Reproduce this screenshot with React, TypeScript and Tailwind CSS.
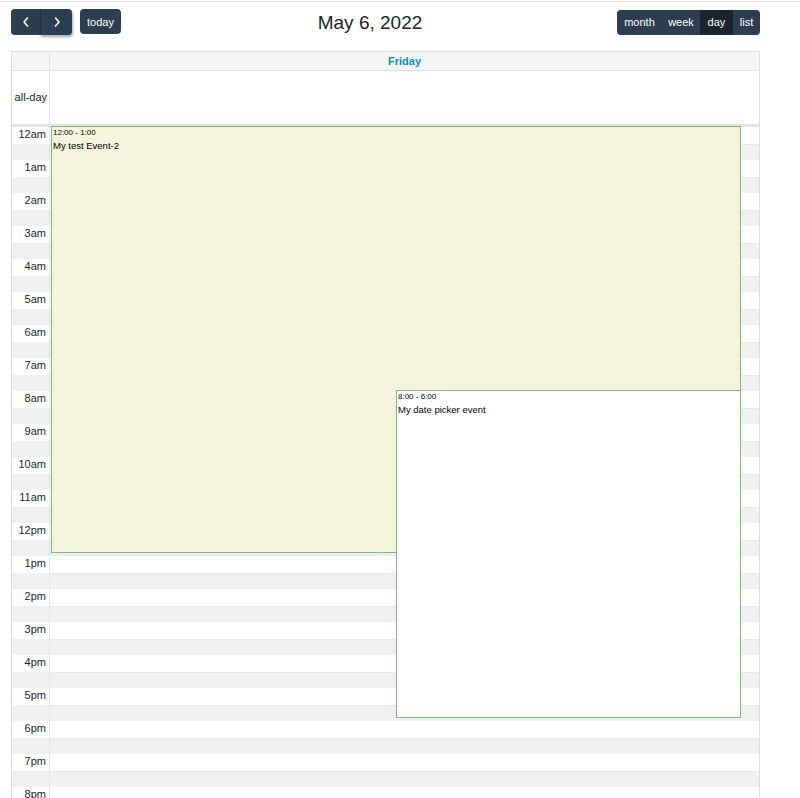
import React from "react";

const hours = ["12am","1am","2am","3am","4am","5am","6am","7am","8am","9am","10am","11am","12pm","1pm","2pm","3pm","4pm","5pm","6pm","7pm","8pm","9pm","10pm","11pm"];

function Chevron({ dir }: { dir: "l" | "r" }) {
  return (
    <svg width="10" height="12" viewBox="0 0 10 12" fill="none" stroke="white" strokeWidth="1.6" strokeLinecap="round" strokeLinejoin="round">
      {dir === "l" ? <path d="M6.5 2 L3 6 L6.5 10" /> : <path d="M3.5 2 L7 6 L3.5 10" />}
    </svg>
  );
}

export default function App() {
  return (
    <div className="w-[800px] h-[798px] overflow-hidden bg-white text-[#212529]" style={{ fontFamily: '"Liberation Sans", Arial, sans-serif' }}>
      <div className="h-px mt-px bg-[#e6e6e6]" />
      <div className="w-[749px] ml-[11px]">
        <div className="flex items-center justify-between mt-[7px] h-[26px]">
          <div className="flex items-start gap-[8px]">
            <div className="flex h-[26px]">
              <button className="w-[29px] h-[26px] bg-[#2c3e50] rounded-l-[4px] flex items-center justify-center">
                <Chevron dir="l" />
              </button>
              <button className="w-[32px] h-[26px] bg-[#2c3e50] rounded-r-[4px] flex items-center justify-center shadow-[1px_2px_3px_rgba(0,0,0,0.35)] border-l border-[#22303d]">
                <Chevron dir="r" />
              </button>
            </div>
            <button className="w-[41px] h-[25px] bg-[#2c3e50] rounded-[4px] text-white text-[11px] pt-[1px]">today</button>
          </div>
          <div className="text-[19px] leading-none pl-[2px]">May 6, 2022</div>
          <div className="flex h-[25px] rounded-[4px] overflow-hidden text-white text-[11px] bg-[#2c3e50]">
            <div className="w-[45px] flex items-center justify-center">month</div>
            <div className="w-[38px] flex items-center justify-center">week</div>
            <div className="w-[33px] flex items-center justify-center bg-[#1a252f]">day</div>
            <div className="w-[27px] flex items-center justify-center">list</div>
          </div>
        </div>

        <div className="mt-[16px] border border-[#dddddd]">
          <div className="flex h-[19px] bg-[#f5f5f5] border-b border-[#e2e2e2]">
            <div className="w-[38px] border-r border-[#e2e2e2]" />
            <div className="flex-1 flex items-center justify-center text-[11px] font-bold text-[#0b8fc4]">Friday</div>
          </div>
          <div className="flex h-[53px]">
            <div className="w-[38px] border-r border-[#e6e6e6] flex items-center justify-end pr-[2px] text-[11px]">all-day</div>
            <div className="flex-1" />
          </div>
          <div className="h-[3px] bg-[#e3e3e3]" />
          <div className="flex">
            <div className="w-[38px] border-r border-[#e6e6e6] shrink-0">
              {hours.map((h) => (
                <div key={h} className="h-[33px]">
                  <div className="h-[16.5px] bg-white flex items-center justify-end pr-[3px] pb-[2px] text-[11px]">{h}</div>
                  <div className="h-[16.5px] bg-[#f0f0f0]" />
                </div>
              ))}
            </div>
            <div className="flex-1 relative">
              {hours.map((h) => (
                <div key={h} className="h-[33px]">
                  <div className="h-[16.5px] bg-white" />
                  <div className="h-[16.5px] bg-[#f0f0f0] border-t border-dotted border-[#e2e2e2]" />
                </div>
              ))}
              <div className="absolute left-[1px] top-[-1px] w-[690px] h-[427px] bg-[#f4f4dc] border border-[#7dbb7d] px-[1px] text-black">
                <div className="text-[8px] leading-[10px] mt-[1px]">12:00 - 1:00</div>
                <div className="text-[9.5px] leading-[12px] mt-[2px]">My test Event-2</div>
              </div>
              <div className="absolute left-[346px] top-[263px] w-[345px] h-[328px] bg-white border border-[#7dbb7d] px-[1px] text-black">
                <div className="text-[8px] leading-[10px] mt-[1px]">8:00 - 6:00</div>
                <div className="text-[9.5px] leading-[12px] mt-[2px]">My date picker event</div>
              </div>
            </div>
          </div>
        </div>
      </div>
    </div>
  );
}
